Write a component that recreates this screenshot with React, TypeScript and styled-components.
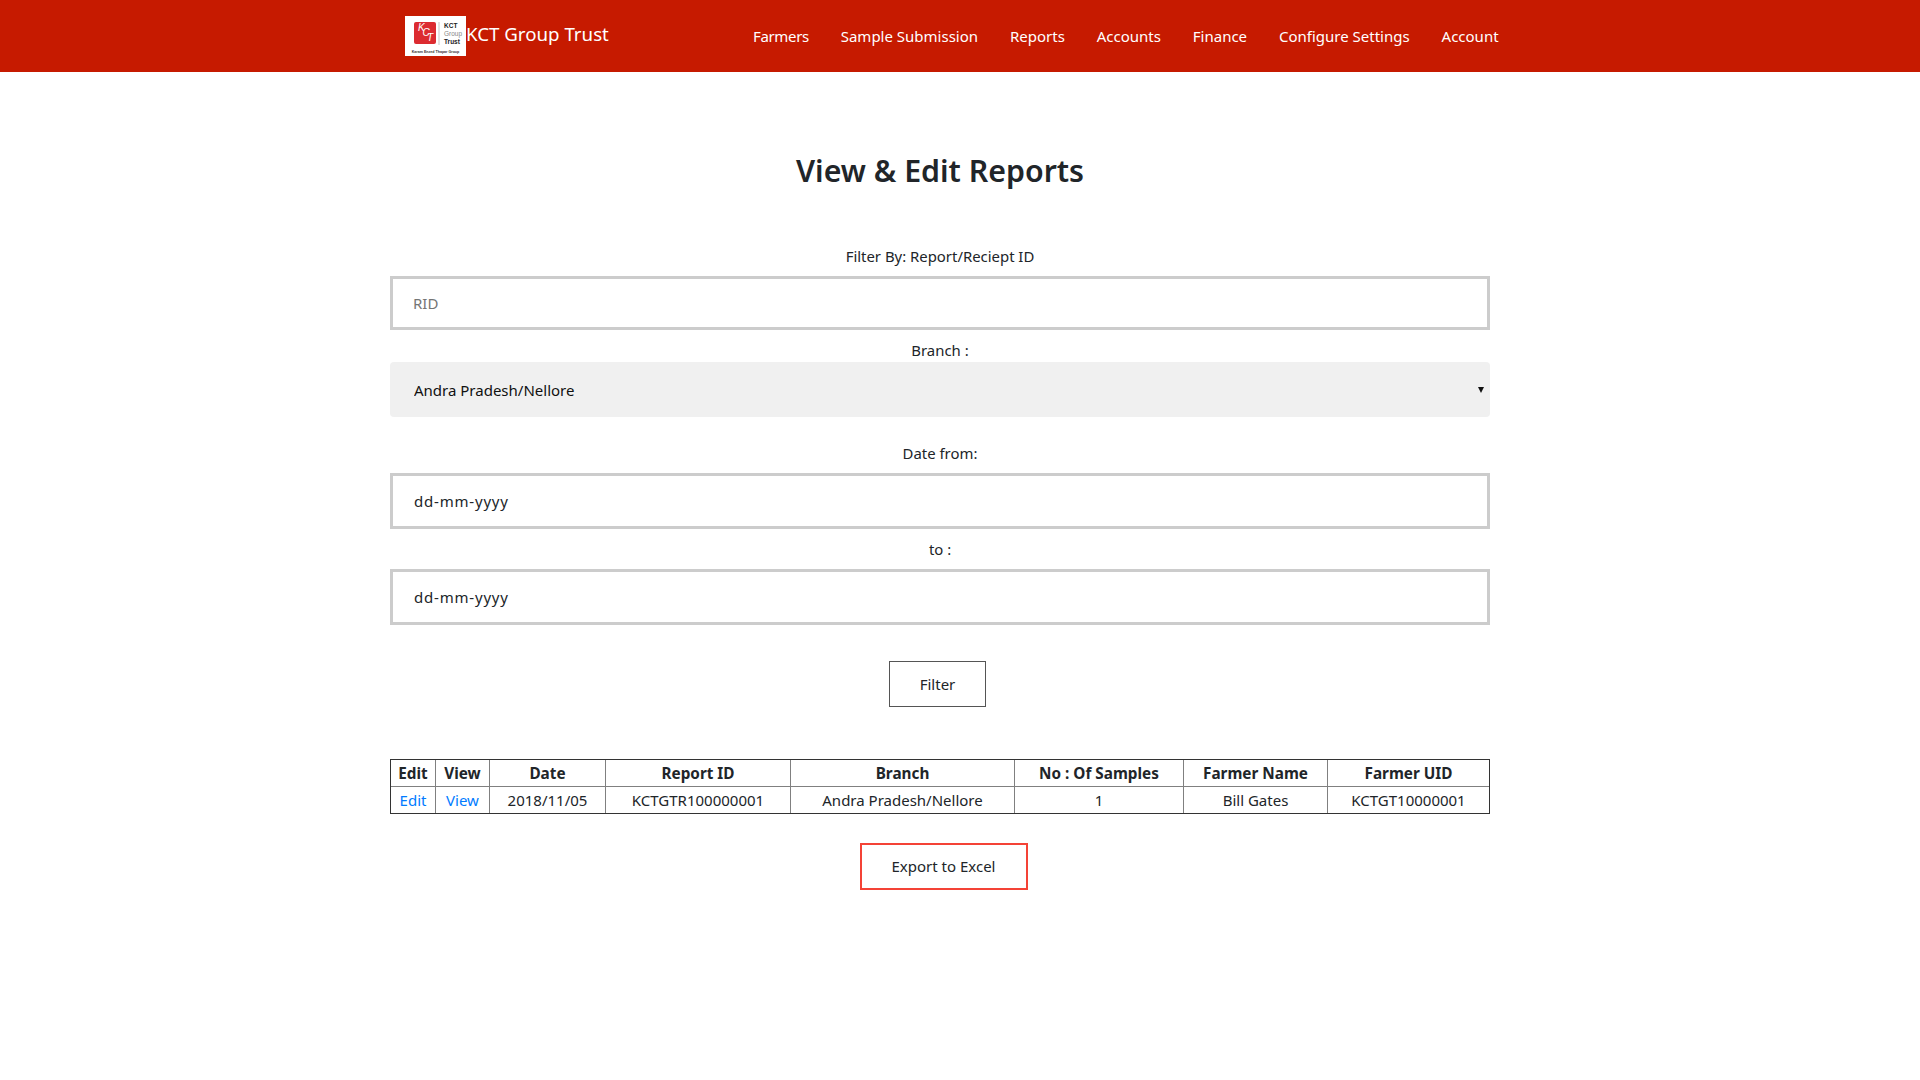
import React from "react";
import styled, { createGlobalStyle } from "styled-components";

const Global = createGlobalStyle`
  html, body { margin: 0; padding: 0; background: #fff; }
  body { font-family: "Noto Sans", "Open Sans", "Liberation Sans", sans-serif; font-size: 15px; line-height: 24px; color: #212529; }
  * { box-sizing: border-box; }
`;

const Header = styled.header`
  height: 72px;
  background: #c61a00;
`;
const HeaderInner = styled.div`
  width: 1140px;
  height: 72px;
  margin: 0 auto;
  padding-left: 15px;
  display: flex;
  align-items: center;
`;
const Brand = styled.a`
  display: flex;
  align-items: center;
  width: 348px;
  color: #fff;
  font-size: 18.7px;
  line-height: 24px;
  text-decoration: none;
`;
const BrandName = styled.span`
  display: block;
  margin-top: -4px;
`;
const LogoBox = styled.svg`
  display: block;
  width: 61px;
  height: 40px;
  flex: none;
`;
const Nav = styled.nav`
  display: flex;
  gap: 31.9px;
`;
const NavLink = styled.a`
  color: #fff;
  font-size: 15px;
  text-decoration: none;
  &:first-child { letter-spacing: -0.35px; }
`;

const Main = styled.main`
  width: 1100px;
  margin-left: 390px;
`;
const Title = styled.h1`
  margin: 0;
  padding-top: 76px;
  height: 172px;
  text-align: center;
  font-size: 30.3px;
  line-height: 46px;
  font-weight: 600;
`;
const Form = styled.form`
  display: flex;
  flex-direction: column;
`;
const Label = styled.label<{ $gap: number }>`
  display: block;
  text-align: center;
  font-size: 14.9px;
  line-height: 24px;
  margin-bottom: ${(p) => p.$gap}px;
`;
const TextInput = styled.input<{ $h: number; $date?: boolean }>`
  display: block;
  width: 100%;
  height: ${(p) => p.$h}px;
  margin-bottom: 8px;
  padding: 0 ${(p) => (p.$date ? 21 : 20)}px;
  border: 3px solid #ccc;
  border-radius: 0;
  background: #fff;
  outline: none;
  font: inherit;
  font-size: 15px;
  letter-spacing: ${(p) => (p.$date ? "0.8px" : "0")};
  color: #212529;
  &::placeholder { color: #757575; opacity: 1; }
`;
const SelectWrap = styled.div`
  position: relative;
  margin-bottom: 24px;
`;
const Select = styled.select`
  display: block;
  width: 100%;
  height: 55px;
  padding: 0 24px;
  border: 0;
  border-radius: 4px;
  background: #f0f0f0;
  appearance: none;
  outline: none;
  font: inherit;
  font-size: 15px;
  color: #111;
`;
const Arrow = styled.svg`
  position: absolute;
  right: 6px;
  top: 25px;
  width: 6px;
  height: 6px;
`;
const FilterRow = styled.div`
  display: flex;
  justify-content: center;
  padding: 28px 5px 52px 0;
`;
const FilterButton = styled.button`
  width: 97px;
  height: 46px;
  background: #fff;
  border: 1px solid #555;
  font: inherit;
  font-size: 15px;
  color: #212529;
`;
const Table = styled.table`
  width: 1100px;
  height: 54px;
  table-layout: fixed;
  border-collapse: separate;
  border-spacing: 0;
  border: 1px solid #333;
  text-align: center;
`;
const Th = styled.th`
  border-right: 1px solid #808080;
  border-bottom: 1px solid #808080;
  padding: 0;
  height: 27px;
  font-size: 15.3px;
  line-height: 24px;
  font-weight: 700;
  &:last-child { border-right: 0; }
`;
const Td = styled.td`
  border-right: 1px solid #808080;
  padding: 0;
  height: 26px;
  font-size: 15px;
  line-height: 24px;
  &:last-child { border-right: 0; }
`;
const TableLink = styled.a`
  color: #007bff;
  text-decoration: none;
`;
const ExportRow = styled.div`
  display: flex;
  justify-content: center;
  padding: 29px 0 0 7px;
`;
const ExportButton = styled.button`
  width: 168px;
  height: 47px;
  padding-bottom: 3px;
  background: #fff;
  border: 2px solid #f44336;
  font: inherit;
  font-size: 15px;
  color: #212529;
`;

const navItems = ["Farmers", "Sample Submission", "Reports", "Accounts", "Finance", "Configure Settings", "Account"];
const columns: [string, number][] = [
  ["Edit", 45], ["View", 54], ["Date", 116], ["Report ID", 185],
  ["Branch", 224], ["No : Of Samples", 169], ["Farmer Name", 144], ["Farmer UID", 161],
];
const cells = ["2018/11/05", "KCTGTR100000001", "Andra Pradesh/Nellore", "1", "Bill Gates", "KCTGT10000001"];

export default function App() {
  return (
    <>
      <Global />
      <Header>
        <HeaderInner>
          <Brand href="#">
            <LogoBox viewBox="0 0 61 40" aria-label="KCT Group Trust logo">
              <rect width="61" height="40" fill="#fff" />
              <rect x="9" y="6" width="22" height="22" rx="2" fill="#dc2b30" />
              <g fill="#fff" fontFamily="Liberation Sans" fontStyle="italic" fontSize="10">
                <text x="13" y="15">K</text>
                <text x="17.500" y="20">C</text>
                <text x="22" y="25">T</text>
              </g>
              <line x1="34" y1="6" x2="34" y2="29" stroke="#888" strokeWidth="0.500" />
              <text x="39" y="12" fontSize="6.500" fontWeight="700" fill="#222" fontFamily="Liberation Sans">KCT</text>
              <text x="39" y="20" fontSize="6.500" fill="#888" fontFamily="Liberation Sans">Group</text>
              <text x="39" y="28" fontSize="6.500" fontWeight="700" fill="#222" fontFamily="Liberation Sans">Trust</text>
              <text x="30.500" y="36.500" fontSize="3.600" fontWeight="700" textAnchor="middle" fill="#333" fontFamily="Liberation Sans">Karam Enzed Thapar Group</text>
            </LogoBox>
            <BrandName>KCT Group Trust</BrandName>
          </Brand>
          <Nav>
            {navItems.map((item) => (
              <NavLink href="#" key={item}>{item}</NavLink>
            ))}
          </Nav>
        </HeaderInner>
      </Header>
      <Main>
        <Title>View &amp; Edit Reports</Title>
        <Form>
          <Label $gap={8}>Filter By: Report/Reciept ID</Label>
          <TextInput $h={54} placeholder="RID" />
          <Label $gap={0}>Branch :</Label>
          <SelectWrap>
            <Select defaultValue="Andra Pradesh/Nellore">
              <option>Andra Pradesh/Nellore</option>
            </Select>
            <Arrow viewBox="0 0 6 6"><path d="M0 0h6L3 6z" fill="#111" /></Arrow>
          </SelectWrap>
          <Label $gap={8}>Date from:</Label>
          <TextInput $h={56} $date defaultValue="dd-mm-yyyy" />
          <Label $gap={8}>to :</Label>
          <TextInput $h={56} $date defaultValue="dd-mm-yyyy" />
          <FilterRow>
            <FilterButton type="button">Filter</FilterButton>
          </FilterRow>
        </Form>
        <Table>
          <colgroup>
            {columns.map(([name, width]) => <col key={name} style={{ width }} />)}
          </colgroup>
          <thead>
            <tr>{columns.map(([name]) => <Th key={name}>{name}</Th>)}</tr>
          </thead>
          <tbody>
            <tr>
              <Td><TableLink href="#">Edit</TableLink></Td>
              <Td><TableLink href="#">View</TableLink></Td>
              {cells.map((cell) => <Td key={cell}>{cell}</Td>)}
            </tr>
          </tbody>
        </Table>
        <ExportRow>
          <ExportButton type="button">Export to Excel</ExportButton>
        </ExportRow>
      </Main>
    </>
  );
}
